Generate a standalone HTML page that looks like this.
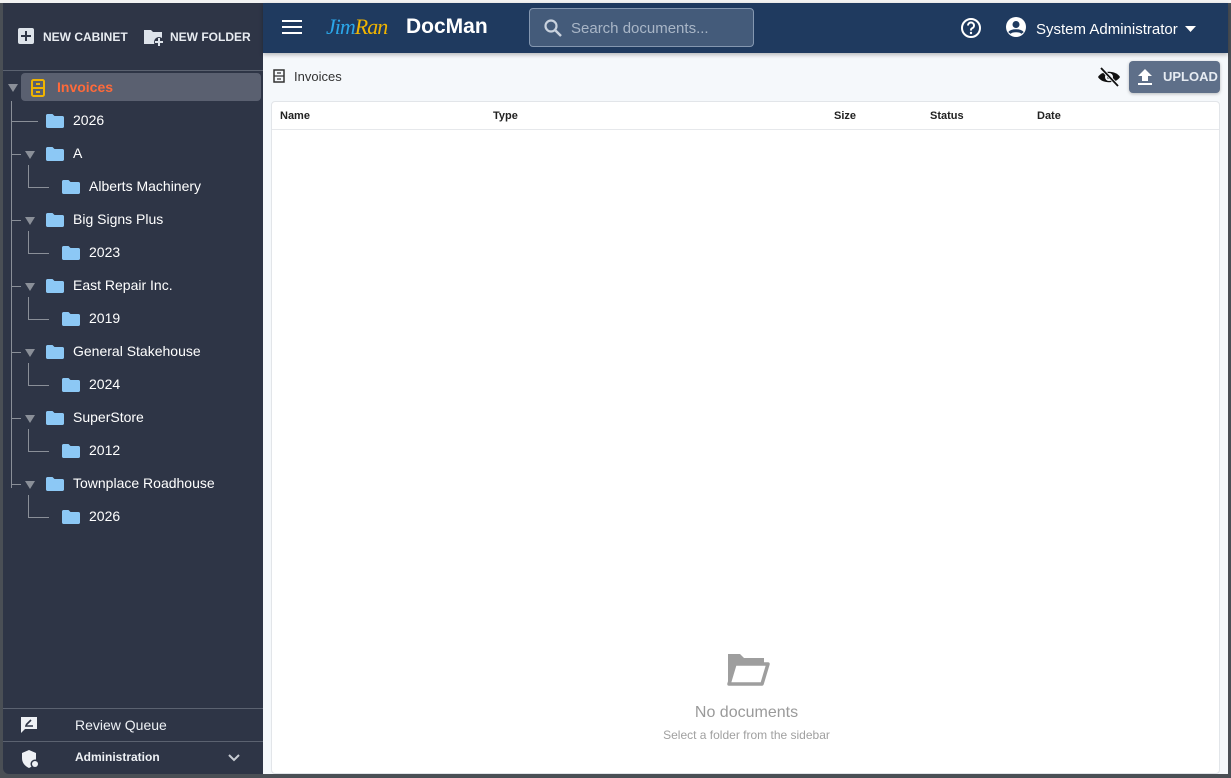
<!DOCTYPE html>
<html><head><meta charset="utf-8"><style>
*{box-sizing:border-box;margin:0;padding:0}
body{width:1231px;height:778px;background:#4a4f55;font-family:"Liberation Sans",Arial,sans-serif;position:relative;overflow:hidden}
.top{position:absolute;left:0;top:0;width:1231px;height:3px;background:#f2f2f2}
.side{position:absolute;left:3px;top:3px;width:260px;height:771px;background:#2e3546;border-bottom-left-radius:6px;color:#fff}
.hdr{position:absolute;left:263px;top:3px;width:965px;height:50px;background:#1f3a5f;box-shadow:0 2px 4px rgba(0,0,0,.25);color:#fff;z-index:2}
.main{position:absolute;left:263px;top:53px;width:965px;height:721px;background:#f5f8fb}
.card{position:absolute;left:8px;top:48px;width:949px;height:673px;background:#fff;border:1px solid #e2e5e9;border-radius:4px}
.abs{position:absolute}
.line{position:absolute;background:#8a8f98}
.th{position:absolute;top:8px;font-size:11px;font-weight:bold;color:#222}
</style></head><body>
<div class="top"></div>
<div class="side">
  <svg class="abs" style="left:14px;top:24px" width="18" height="18" viewBox="0 0 18 18"><rect x="1" y="1" width="16" height="16" rx="2" fill="#dde3ea"/><path d="M9 4v10M4 9h10" stroke="#2e3546" stroke-width="2"/></svg>
  <div class="abs" style="left:40px;top:27px;font-size:12px;font-weight:bold;color:#e8ecf1">NEW CABINET</div>
  <svg class="abs" style="left:140px;top:24px" width="22" height="20" viewBox="0 0 22 20"><path d="M1 3h7l2 2h9v12H1z" fill="#dde3ea"/><circle cx="16" cy="15" r="5" fill="#2e3546"/><path d="M16 11v8M12 15h8" stroke="#dde3ea" stroke-width="2"/></svg>
  <div class="abs" style="left:167px;top:27px;font-size:12px;font-weight:bold;color:#e8ecf1">NEW FOLDER</div>
  <div class="abs" style="left:0;top:67px;width:260px;height:1px;background:#5b6270"></div>
  <div class="abs" style="left:18px;top:70px;width:240px;height:28px;background:#5a6070;border-radius:4px"></div>
  <svg class="abs" style="left:4px;top:80px" width="12" height="10"><path d="M1 1h10L6 9z" fill="#8a8f98"/></svg>
  <svg class="abs" style="left:27px;top:75px" width="16" height="20" viewBox="0 0 16 20"><rect x="2" y="2" width="12" height="16" rx="1.5" fill="none" stroke="#f0b400" stroke-width="2"/><path d="M2 10h12M6 6h4M6 14h4" stroke="#f0b400" stroke-width="2"/></svg>
  <div class="abs" style="left:54px;top:76px;font-size:14px;font-weight:bold;color:#ff6a3a">Invoices</div>

  <div class="line" style="left:8px;top:98px;width:1px;height:387px"></div>
  <div id="tree"></div>
  <div class="abs" style="left:0;top:705px;width:260px;height:1px;background:#5b6270"></div>
  <svg class="abs" style="left:17px;top:713px" width="18" height="18" viewBox="0 0 18 18"><path d="M1 1h16v12H5l-4 4z" fill="#eef1f5"/><path d="M5 10h8M6 9l5-5" stroke="#2e3546" stroke-width="1.6"/></svg>
  <div class="abs" style="left:72px;top:714px;font-size:14px;color:#eef1f5">Review Queue</div>
  <div class="abs" style="left:0;top:738px;width:260px;height:1px;background:#5b6270"></div>
  <svg class="abs" style="left:18px;top:746px" width="20" height="20" viewBox="0 0 20 20"><path d="M8 1l7 3v5c0 5-3 8-7 10-4-2-7-5-7-10V4z" fill="#eef1f5"/><circle cx="14" cy="15" r="4.5" fill="#2e3546"/><circle cx="14" cy="15" r="3" fill="#eef1f5"/></svg>
  <div class="abs" style="left:72px;top:747px;font-size:12px;font-weight:bold;color:#eef1f5">Administration</div>
  <svg class="abs" style="left:224px;top:750px" width="14" height="10"><path d="M2 2l5 5 5-5" fill="none" stroke="#c8ccd3" stroke-width="2"/></svg>
</div>
<div class="hdr">
  <svg class="abs" style="left:19px;top:16px" width="20" height="16"><path d="M0 2h20M0 8h20M0 14h20" stroke="#fff" stroke-width="2"/></svg>
  <div class="abs" style="left:63px;top:11px;font-size:22px;font-style:italic;font-family:'Liberation Serif',serif;letter-spacing:-1px"><span style="color:#2ba6e8">Jim</span><span style="color:#f0b400">Ran</span></div>
  <div class="abs" style="left:143px;top:12px;font-size:21px;font-weight:bold">DocMan</div>
  <div class="abs" style="left:266px;top:5px;width:225px;height:39px;background:#445b7a;border:1px solid #8497b0;border-radius:4px"></div>
  <svg class="abs" style="left:280px;top:15px" width="20" height="20" viewBox="0 0 20 20"><circle cx="8" cy="8" r="5.5" fill="none" stroke="#c9d2de" stroke-width="2.2"/><path d="M12 12l6 6" stroke="#c9d2de" stroke-width="2.5"/></svg>
  <div class="abs" style="left:308px;top:17px;font-size:15px;color:#a9b6c7">Search documents...</div>
  <svg class="abs" style="left:697px;top:14px" width="22" height="22" viewBox="0 0 22 22"><circle cx="11" cy="11" r="9" fill="none" stroke="#fff" stroke-width="2"/><path d="M8 8.5a3 3 0 1 1 4 2.8c-1 .4-1 1-1 2.2" fill="none" stroke="#fff" stroke-width="2"/><circle cx="11" cy="16" r="1.2" fill="#fff"/></svg>
  <svg class="abs" style="left:742px;top:13px" width="22" height="22" viewBox="0 0 22 22"><circle cx="11" cy="11" r="10" fill="#fff"/><circle cx="11" cy="8.5" r="3.5" fill="#1f3a5f"/><path d="M4.5 17c2-3 11-3 13 0" stroke="#1f3a5f" stroke-width="3" fill="none"/></svg>
  <div class="abs" style="left:773px;top:18px;font-size:15px">System Administrator</div>
  <svg class="abs" style="left:922px;top:22px" width="12" height="8"><path d="M0 1h11L5.5 7z" fill="#fff"/></svg>
</div>
<div class="main">
  <svg class="abs" style="left:10px;top:16px" width="12" height="14" viewBox="0 0 12 14"><rect x="1" y="1" width="10" height="12" fill="none" stroke="#333" stroke-width="1.5"/><path d="M1 7h10M4 4h4M4 10h4" stroke="#333" stroke-width="1.3"/></svg>
  <div class="abs" style="left:31px;top:16px;font-size:13px;color:#333">Invoices</div>
  <svg class="abs" style="left:834px;top:14px" width="24" height="20" viewBox="0 0 24 20"><path d="M1 10c4-7 18-7 22 0-4 7-18 7-22 0z" fill="#111"/><circle cx="12" cy="10" r="4" fill="#f5f8fb"/><circle cx="12" cy="10" r="2" fill="#111"/><path d="M4 1l17 18" stroke="#f5f8fb" stroke-width="3.5"/><path d="M4 1l17 18" stroke="#111" stroke-width="1.8"/></svg>
  <div class="abs" style="left:866px;top:8px;width:91px;height:32px;background:#5e6f89;border-radius:4px;box-shadow:0 1px 3px rgba(0,0,0,.25)"></div>
  <svg class="abs" style="left:873px;top:15px" width="18" height="18" viewBox="0 0 18 18"><path d="M9 1l-7 7h4v5h6V8h4z" fill="#fff"/><path d="M2 16h14" stroke="#fff" stroke-width="2"/></svg>
  <div class="abs" style="left:900px;top:16px;font-size:13px;font-weight:bold;color:#e6ebf2">UPLOAD</div>
  <div class="card">
    <div class="th" style="left:8px">Name</div>
    <div class="th" style="left:221px">Type</div>
    <div class="th" style="left:562px">Size</div>
    <div class="th" style="left:658px">Status</div>
    <div class="th" style="left:765px">Date</div>
    <div class="abs" style="left:0;top:27px;width:947px;height:1px;background:#e6e8eb"></div>
    <svg class="abs" style="left:454px;top:550px" width="44" height="34" viewBox="0 0 44 34"><path d="M2 2h12l4 4h20v6H10L4 31H2z" fill="#9e9e9e"/><path d="M9 12h33l-6 20H3z" fill="none" stroke="#9e9e9e" stroke-width="3.5" stroke-linejoin="round"/></svg>
    <div class="abs" style="left:0;width:949px;top:602px;text-align:center;font-size:16px;color:#9a9a9a">No documents</div>
    <div class="abs" style="left:0;width:949px;top:626px;text-align:center;font-size:12px;color:#a0a0a0">Select a folder from the sidebar</div>
  </div>
</div>
<script>
var items=[[0,'2026',0],[0,'A',1],[1,'Alberts Machinery'],[0,'Big Signs Plus',1],[1,'2023'],[0,'East Repair Inc.',1],[1,'2019'],[0,'General Stakehouse',1],[1,'2024'],[0,'SuperStore',1],[1,'2012'],[0,'Townplace Roadhouse',1],[1,'2026']];
var h='';var fold='<svg width="18" height="14" viewBox="0 0 18 14"><path d="M0 1.5C0 .7.7 0 1.5 0h5l2 2h8c.8 0 1.5.7 1.5 1.5v9c0 .8-.7 1.5-1.5 1.5h-15C.7 14 0 13.3 0 12.5z" fill="#8cc8f5"/></svg>';
items.forEach(function(it,i){var c=118+33*i;
 if(it[0]==0){
  if(it[2]){h+='<div class="line" style="left:8px;top:'+c+'px;width:10px;height:1px"></div><svg class="abs" style="left:21px;top:'+(c-4)+'px" width="12" height="10"><path d="M1 1h10L6 9z" fill="#8a8f98"/></svg>';}
  else h+='<div class="line" style="left:8px;top:'+c+'px;width:27px;height:1px"></div>';
  h+='<div class="abs" style="left:43px;top:'+(c-7)+'px">'+fold+'</div><div class="abs" style="left:70px;top:'+(c-9)+'px;font-size:14px">'+it[1]+'</div>';
 }else{
  h+='<div class="line" style="left:25px;top:'+(c-22)+'px;width:1px;height:22px"></div><div class="line" style="left:25px;top:'+c+'px;width:21px;height:1px"></div>';
  h+='<div class="abs" style="left:59px;top:'+(c-7)+'px">'+fold+'</div><div class="abs" style="left:86px;top:'+(c-9)+'px;font-size:14px">'+it[1]+'</div>';
 }});
document.getElementById('tree').innerHTML=h;
</script>
</body></html>
